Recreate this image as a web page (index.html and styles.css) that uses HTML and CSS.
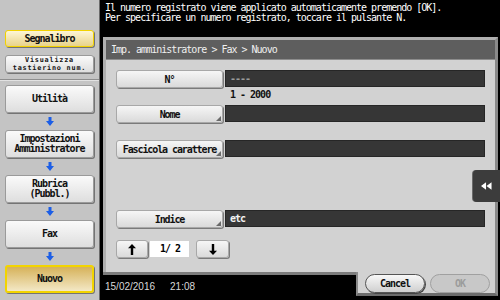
FILE: index.html
```html
<!DOCTYPE html>
<html lang="it">
<head>
    <meta charset="UTF-8">
    <title>Fax - Nuovo</title>
    <link rel="stylesheet" href="styles.css">
</head>

<body>
    <div class="screen">
        <aside class="side">
            <div class="side-top">
                <button class="sbtn sbtn-gold bookmark">Segnalibro</button>
                <button class="sbtn keypad">Visualizza<br>tastierino num.</button>
            </div>
            <div class="side-path">
                <button class="sbtn step">Utilità</button>
                <svg class="down" viewBox="0 0 8 9"><path d="M2.5 0h3v4h2.5l-4 5-4-5h2.5z"/></svg>
                <button class="sbtn step two">Impostazioni<br>Amministratore</button>
                <svg class="down" viewBox="0 0 8 9"><path d="M2.5 0h3v4h2.5l-4 5-4-5h2.5z"/></svg>
                <button class="sbtn step two">Rubrica<br>(Pubbl.)</button>
                <svg class="down" viewBox="0 0 8 9"><path d="M2.5 0h3v4h2.5l-4 5-4-5h2.5z"/></svg>
                <button class="sbtn step">Fax</button>
                <svg class="down" viewBox="0 0 8 9"><path d="M2.5 0h3v4h2.5l-4 5-4-5h2.5z"/></svg>
                <button class="sbtn step sbtn-current">Nuovo</button>
            </div>
        </aside>

        <main class="main">
            <div class="msg">
                Il numero registrato viene applicato automaticamente premendo [OK].<br>
                Per specificare un numero registrato, toccare il pulsante N.
            </div>

            <section class="panel">
                <div class="crumb">Imp. amministratore &gt; Fax &gt; Nuovo</div>
                <div class="form">
                    <div class="slot">
                        <div class="row">
                            <button class="key">N°</button>
                            <div class="field dim">----</div>
                        </div>
                        <div class="hint">1 - 2000</div>
                    </div>
                    <div class="slot">
                        <div class="row">
                            <button class="key input">Nome</button>
                            <div class="field"></div>
                        </div>
                    </div>
                    <div class="slot">
                        <div class="row">
                            <button class="key input">Fascicola carattere</button>
                            <div class="field"></div>
                        </div>
                    </div>
                    <div class="slot"></div>
                    <div class="slot last">
                        <div class="row">
                            <button class="key input">Indice</button>
                            <div class="field">etc</div>
                        </div>
                    </div>
                    <div class="pager">
                        <button class="pg up">
                            <svg viewBox="0 0 10 11"><path d="M3.8 11V4.2H1L5 0l4 4.2H6.2V11z"/></svg>
                        </button>
                        <div class="page">1/ 2</div>
                        <button class="pg down">
                            <svg viewBox="0 0 10 11"><path d="M3.8 0v6.8H1L5 11l4-4.2H6.2V0z"/></svg>
                        </button>
                    </div>
                </div>
                <div class="tab">
                    <svg viewBox="0 0 12 8"><path d="M0 4l5.5-4v8zM6 4l5.5-4v8z"/></svg>
                </div>
            </section>

            <footer class="foot">
                <div class="status"><span>15/02/2016</span><span>21:08</span></div>
                <div class="actions">
                    <button class="pill">Cancel</button>
                    <button class="pill" disabled>OK</button>
                </div>
            </footer>
        </main>
    </div>
</body>
</html>
```

FILE: styles.css
```css
body {
    margin: 0;
    padding: 0;
    background: #000;
    font-family: "DejaVu Sans Mono", monospace;
    font-size: 10px;
    letter-spacing: -1px;
}

button {
    font-family: inherit;
    font-size: inherit;
    letter-spacing: inherit;
    padding: 0;
    margin: 0;
    color: #111;
}

.screen {
    display: flex;
    width: 500px;
    height: 300px;
    overflow: hidden;
}

/* left column */
.side {
    width: 100px;
    background: #c4c4c4;
    border-right: 1px solid #6a6a6a;
    box-sizing: border-box;
}

.side-top {
    height: 80px;
    box-sizing: border-box;
    padding: 30px 0 0 5px;
    border-bottom: 1px solid #8e8e8e;
    box-shadow: 0 1px 0 #e2e2e2;
}

.side-path {
    display: flex;
    flex-direction: column;
    align-items: center;
    padding-top: 5px;
    padding-right: 5px;
}

.sbtn {
    display: block;
    width: 89px;
    border: 1px solid #9a9a9a;
    border-radius: 3px;
    background: linear-gradient(#fafafa, #dedede);
    box-shadow: 1px 1px 0 #747474;
    font-weight: bold;
    line-height: 10px;
    text-align: center;
}

.bookmark {
    height: 17px;
    margin-bottom: 8px;
}

.keypad {
    height: 18px;
    font-size: 6.8px;
    line-height: 8px;
    letter-spacing: 0.8px;
}

.step {
    height: 28px;
    margin-left: 5px;
}

.sbtn-gold {
    border: 1px solid #f2d200;
    background: linear-gradient(#fdf6d6, #e8d38a);
}

.sbtn-current {
    border: 2px solid #f2d400;
    background: linear-gradient(#d6b25a, #f3e8c6);
}

.down {
    width: 8px;
    height: 9px;
    margin: 4px 0 4px 5px;
    fill: #1c5ee6;
}

/* right column */
.main {
    flex: 1;
    display: flex;
    flex-direction: column;
}

.msg {
    height: 37px;
    box-sizing: border-box;
    padding: 3px 0 0 5px;
    color: #fff;
    line-height: 10px;
}

.panel {
    position: relative;
    height: 235px;
    box-sizing: border-box;
    margin: 0 2px 0 3px;
    background: #d2d2d2;
    border: 3px solid #b0b0b0;
    border-right-color: #8a8a8a;
    border-bottom: none;
}

.crumb {
    height: 20px;
    line-height: 20px;
    padding-left: 5px;
    background: #5e5e5e;
    border-bottom: 1px solid #8c8c8c;
    box-sizing: border-box;
    color: #f0f0f0;
}

.form {
    padding: 10px 0 0 10px;
}

.slot {
    height: 35px;
}

.slot.last {
    height: 30px;
}

.row {
    display: flex;
    height: 18px;
}

.key {
    position: relative;
    width: 107px;
    height: 18px;
    border: 1px solid #a8a8a8;
    border-radius: 3px;
    background: linear-gradient(#f6f6f6, #dadada);
    box-shadow: 1px 1px 0 #7a7a7a;
    font-weight: bold;
    letter-spacing: -1.1px;
}

.key.input::after {
    content: "";
    position: absolute;
    right: 1px;
    bottom: 1px;
    border-left: 5px solid transparent;
    border-bottom: 5px solid #6a6a6a;
}

.field {
    width: 260px;
    height: 17px;
    margin-left: 2px;
    box-sizing: border-box;
    padding-left: 4px;
    background: #363636;
    border: 1px solid #262626;
    color: #f2f2f2;
    font-weight: bold;
    line-height: 15px;
}

.field.dim {
    color: #9a9a9a;
}

.hint {
    padding-left: 114px;
    line-height: 14px;
    font-weight: bold;
    color: #111;
}

.pager {
    display: flex;
    align-items: center;
    height: 18px;
}

.pg {
    height: 18px;
    border: 1px solid #a8a8a8;
    border-radius: 3px;
    background: linear-gradient(#f6f6f6, #dadada);
    box-shadow: 1px 1px 0 #7a7a7a;
}

.pg.up {
    width: 32px;
}

.pg.down {
    width: 33px;
}

.pg svg {
    width: 10px;
    height: 11px;
    fill: #000;
    display: block;
    margin: 0 auto;
}

.page {
    width: 39px;
    height: 16px;
    margin: 0 2px;
    box-sizing: border-box;
    padding-left: 10px;
    background: #fff;
    line-height: 16px;
    font-weight: bold;
}

.tab {
    position: absolute;
    top: 130px;
    right: -5px;
    width: 27px;
    height: 32px;
    display: flex;
    align-items: center;
    justify-content: center;
    background: #3c3c3c;
    border-radius: 4px 0 0 4px;
    box-shadow: -1px 0 0 #6a6a6a;
}

.tab svg {
    width: 11px;
    height: 8px;
    fill: #fff;
}

/* bottom bar */
.foot {
    display: flex;
    height: 28px;
    margin-left: 3px;
}

.status {
    flex: 1;
    display: flex;
    gap: 15px;
    padding: 6px 0 0 2px;
    border-top: 3px solid #7c7c7c;
    background: #000;
    color: #d8d8d8;
    font-family: "Liberation Sans", Arial, sans-serif;
    letter-spacing: 0;
    font-size: 10px;
}

.actions {
    display: flex;
    gap: 5px;
    width: 142px;
    height: 24px;
    box-sizing: border-box;
    padding: 2px 0 0 7px;
    margin-right: 2px;
    background: #d2d2d2;
    border-left: 2px solid #8a8a8a;
    border-right: 3px solid #8a8a8a;
    border-bottom: 3px solid #6c6c6c;
}

.pill {
    width: 60px;
    height: 19px;
    border: 1px solid #555;
    border-radius: 10px;
    background: linear-gradient(#f8f8f8, #cfcfcf);
    box-shadow: 1px 1px 0 #444;
    font-weight: bold;
}

.pill:disabled {
    border-color: #a0a0a0;
    background: #c8c8c8;
    box-shadow: none;
    color: #9c9c9c;
}
```
